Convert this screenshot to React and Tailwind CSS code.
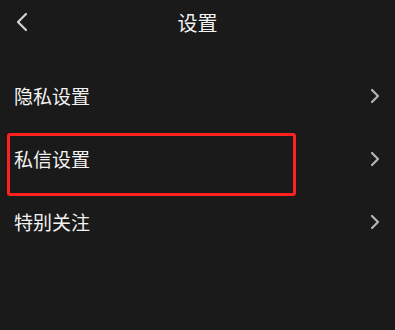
import React from "react";

const items = ["隐私设置", "私信设置", "特别关注"];

function Chevron({ left }) {
  return (
    <svg
      width={left ? 14 : 10}
      height={left ? 20 : 16}
      viewBox={left ? "0 0 14 20" : "0 0 10 16"}
      fill="none"
      stroke={left ? "#d4d4d4" : "#b5b5b5"}
      strokeWidth="2.2"
      strokeLinecap="round"
      strokeLinejoin="round"
    >
      {left ? <path d="M11 2 L3 10 L11 18" /> : <path d="M2 2 L8 8 L2 14" />}
    </svg>
  );
}

export default function App() {
  return (
    <div
      className="relative w-[395px] h-[330px] bg-[#1a1a1a] text-[#f2f2f2] overflow-hidden"
      style={{ fontFamily: '"Noto Sans CJK SC", "Noto Sans", sans-serif' }}
    >
      {/* header */}
      <div className="relative flex items-center justify-center h-[45px]">
        <div className="absolute left-[15px] top-[12px]">
          <Chevron left />
        </div>
        <span className="text-[20px] leading-none">设置</span>
      </div>

      {/* list */}
      <div className="mt-[19px] flex flex-col">
        {items.map((label) => (
          <div
            key={label}
            className="flex items-center justify-between h-[63px] pl-[14px] pr-[15px]"
          >
            <span className="text-[19px] leading-none">{label}</span>
            <Chevron />
          </div>
        ))}
      </div>

      {/* highlight annotation */}
      <div className="absolute left-[7px] top-[133px] w-[289px] h-[63px] border-[3px] border-[#ff2020] rounded-[3px]" />
    </div>
  );
}
